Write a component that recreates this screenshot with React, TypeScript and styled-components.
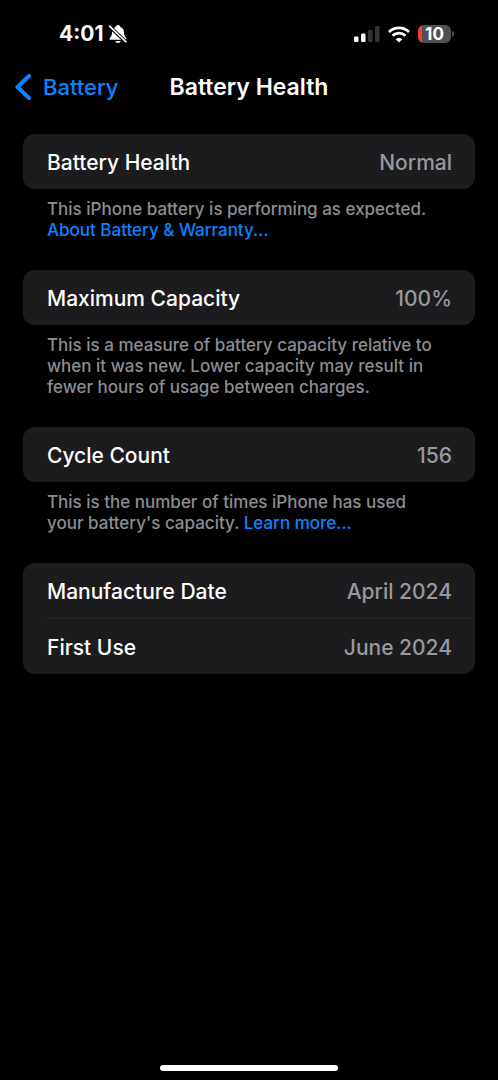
import React from "react";
import styled, { createGlobalStyle } from "styled-components";

const GlobalStyle = createGlobalStyle`
  *, *::before, *::after { box-sizing: border-box; }
  body {
    margin: 0;
    background: #000;
    color: #fff;
    font-family: Inter, "Liberation Sans", sans-serif;
    -webkit-font-smoothing: antialiased;
  }
`;

const Screen = styled.div`
  display: flex;
  flex-direction: column;
  min-height: 100vh;
`;

const StatusBar = styled.div`
  display: flex;
  align-items: center;
  justify-content: space-between;
  height: 62px;
  padding: 6px 44px 0 59px;
`;

const StatusGroup = styled.div<{ $gap: number }>`
  display: flex;
  align-items: center;
  gap: ${(p) => p.$gap}px;
`;

const Time = styled.span`
  font-size: 21px;
  line-height: 26px;
  font-weight: 700;
`;

const BatteryBadge = styled.span`
  display: flex;
  align-items: center;
  gap: 1px;

  &::after {
    content: "";
    width: 2px;
    height: 6px;
    border-radius: 0 2px 2px 0;
    background: #4a4a4c;
  }
`;

const BatteryLevel = styled.span`
  display: block;
  width: 33px;
  height: 18px;
  border-radius: 6px;
  background: linear-gradient(to right, #ff3b30 4px, #505052 4px);
  font-size: 17px;
  line-height: 18px;
  font-weight: 700;
  text-align: center;
`;

const NavBar = styled.header`
  display: grid;
  grid-template-columns: 1fr auto 1fr;
  align-items: center;
  height: 50px;
  padding: 0 15px;
`;

const BackButton = styled.button`
  display: flex;
  align-items: center;
  justify-self: start;
  gap: 11px;
  padding: 0;
  border: 0;
  background: none;
  color: #0a84ff;
  font: inherit;
  font-size: 22px;
  line-height: 28px;
  font-weight: 500;
  cursor: pointer;
`;

const Title = styled.h1`
  margin: 0;
  font-size: 23px;
  line-height: 28px;
  font-weight: 600;
`;

const Content = styled.main`
  flex: 1;
  padding: 22px 23px 0;
`;

const Section = styled.section`
  margin-bottom: 29px;
`;

const Card = styled.dl`
  margin: 0;
  border-radius: 12px;
  background: #1c1c1e;
`;

const Row = styled.div`
  display: flex;
  align-items: center;
  justify-content: space-between;
  height: 55px;
  margin-left: 23px;
  padding: 2px 23px 0 1px;
  font-size: 21px;
  line-height: 28px;
  font-weight: 500;

  & + & {
    height: 56px;
    border-top: 1px solid #29292c;
  }
`;

const Label = styled.dt``;

const Value = styled.dd`
  margin: 0;
  color: #98989f;
`;

const Footnote = styled.p`
  margin: 10px 36px 0 24px;
  color: #8d8d93;
  font-size: 17px;
  line-height: 21px;
  font-weight: 500;
`;

const FootLink = styled.a`
  color: #0a84ff;
  text-decoration: none;
`;

const HomeIndicator = styled.div`
  align-self: center;
  width: 178px;
  height: 6px;
  margin-bottom: 9px;
  border-radius: 3px;
  background: #fff;
`;

function BellSlashIcon() {
  return (
    <svg width="20" height="20" viewBox="0 0 20 20" aria-label="Silent mode">
      <path
        d="M10 1c-1.300 0-2.200.8-2.400 1.900C5 3.800 4 6 4 8.500c0 2.500-.5 3.700-2 5.200-.8.800-.5 2 .7 2h14.600c1.200 0 1.500-1.200.7-2-1.500-1.500-2-2.700-2-5.200 0-2.500-1-4.700-3.600-5.600C12.200 1.800 11.300 1 10 1zM7.300 17h5.400c-.3 1.300-1.300 2-2.700 2s-2.400-.7-2.700-2z"
        fill="#fff"
      />
      <path d="M1 2l17 16" stroke="#000" strokeWidth="3.600" />
      <path d="M1.500 2.200l16.500 15.600" stroke="#fff" strokeWidth="1.600" strokeLinecap="round" />
    </svg>
  );
}

function SignalIcon() {
  return (
    <svg width="26" height="16" viewBox="0 0 26 16" aria-label="Cellular signal">
      <rect x="0" y="10.500" width="4.500" height="5.500" rx="1.200" fill="#fff" />
      <rect x="7" y="7.500" width="4.500" height="8.500" rx="1.200" fill="#fff" />
      <rect x="14" y="4" width="4.500" height="12" rx="1.200" fill="#343436" />
      <rect x="21" y="0" width="4.500" height="16" rx="1.200" fill="#343436" />
    </svg>
  );
}

function WifiIcon() {
  return (
    <svg width="22" height="17" viewBox="0 0 22 17" aria-label="Wi-Fi">
      <g fill="none" stroke="#fff" strokeWidth="2.800">
        <path d="M1 6a14.300 14.300 0 0 1 20 0" />
        <path d="M4.600 9.800a9.200 9.200 0 0 1 12.800 0" />
      </g>
      <path d="M11 16.500l-3.300-3.300a4.800 4.800 0 0 1 6.600 0z" fill="#fff" />
    </svg>
  );
}

function ChevronIcon() {
  return (
    <svg width="17" height="26" viewBox="0 0 17 26" aria-hidden="true">
      <path
        d="M14 2L2.500 13L14 24"
        fill="none"
        stroke="currentColor"
        strokeWidth="4"
        strokeLinecap="round"
        strokeLinejoin="round"
      />
    </svg>
  );
}

function DetailRow({ label, value }: { label: string; value: string }) {
  return (
    <Row>
      <Label>{label}</Label>
      <Value>{value}</Value>
    </Row>
  );
}

export default function App() {
  return (
    <>
      <GlobalStyle />
      <Screen>
        <StatusBar>
          <StatusGroup $gap={5}>
            <Time>4:01</Time>
            <BellSlashIcon />
          </StatusGroup>
          <StatusGroup $gap={8}>
            <SignalIcon />
            <WifiIcon />
            <BatteryBadge>
              <BatteryLevel>10</BatteryLevel>
            </BatteryBadge>
          </StatusGroup>
        </StatusBar>

        <NavBar>
          <BackButton type="button">
            <ChevronIcon />
            Battery
          </BackButton>
          <Title>Battery Health</Title>
        </NavBar>

        <Content>
          <Section>
            <Card>
              <DetailRow label="Battery Health" value="Normal" />
            </Card>
            <Footnote>
              This iPhone battery is performing as expected.{" "}
              <FootLink href="#warranty">About Battery &amp; Warranty...</FootLink>
            </Footnote>
          </Section>

          <Section>
            <Card>
              <DetailRow label="Maximum Capacity" value="100%" />
            </Card>
            <Footnote>
              This is a measure of battery capacity relative to when it was new. Lower capacity
              may result in fewer hours of usage between charges.
            </Footnote>
          </Section>

          <Section>
            <Card>
              <DetailRow label="Cycle Count" value="156" />
            </Card>
            <Footnote>
              This is the number of times iPhone has used your battery's capacity.{" "}
              <FootLink href="#cycles">Learn more...</FootLink>
            </Footnote>
          </Section>

          <Section>
            <Card>
              <DetailRow label="Manufacture Date" value="April 2024" />
              <DetailRow label="First Use" value="June 2024" />
            </Card>
          </Section>
        </Content>

        <HomeIndicator />
      </Screen>
    </>
  );
}
